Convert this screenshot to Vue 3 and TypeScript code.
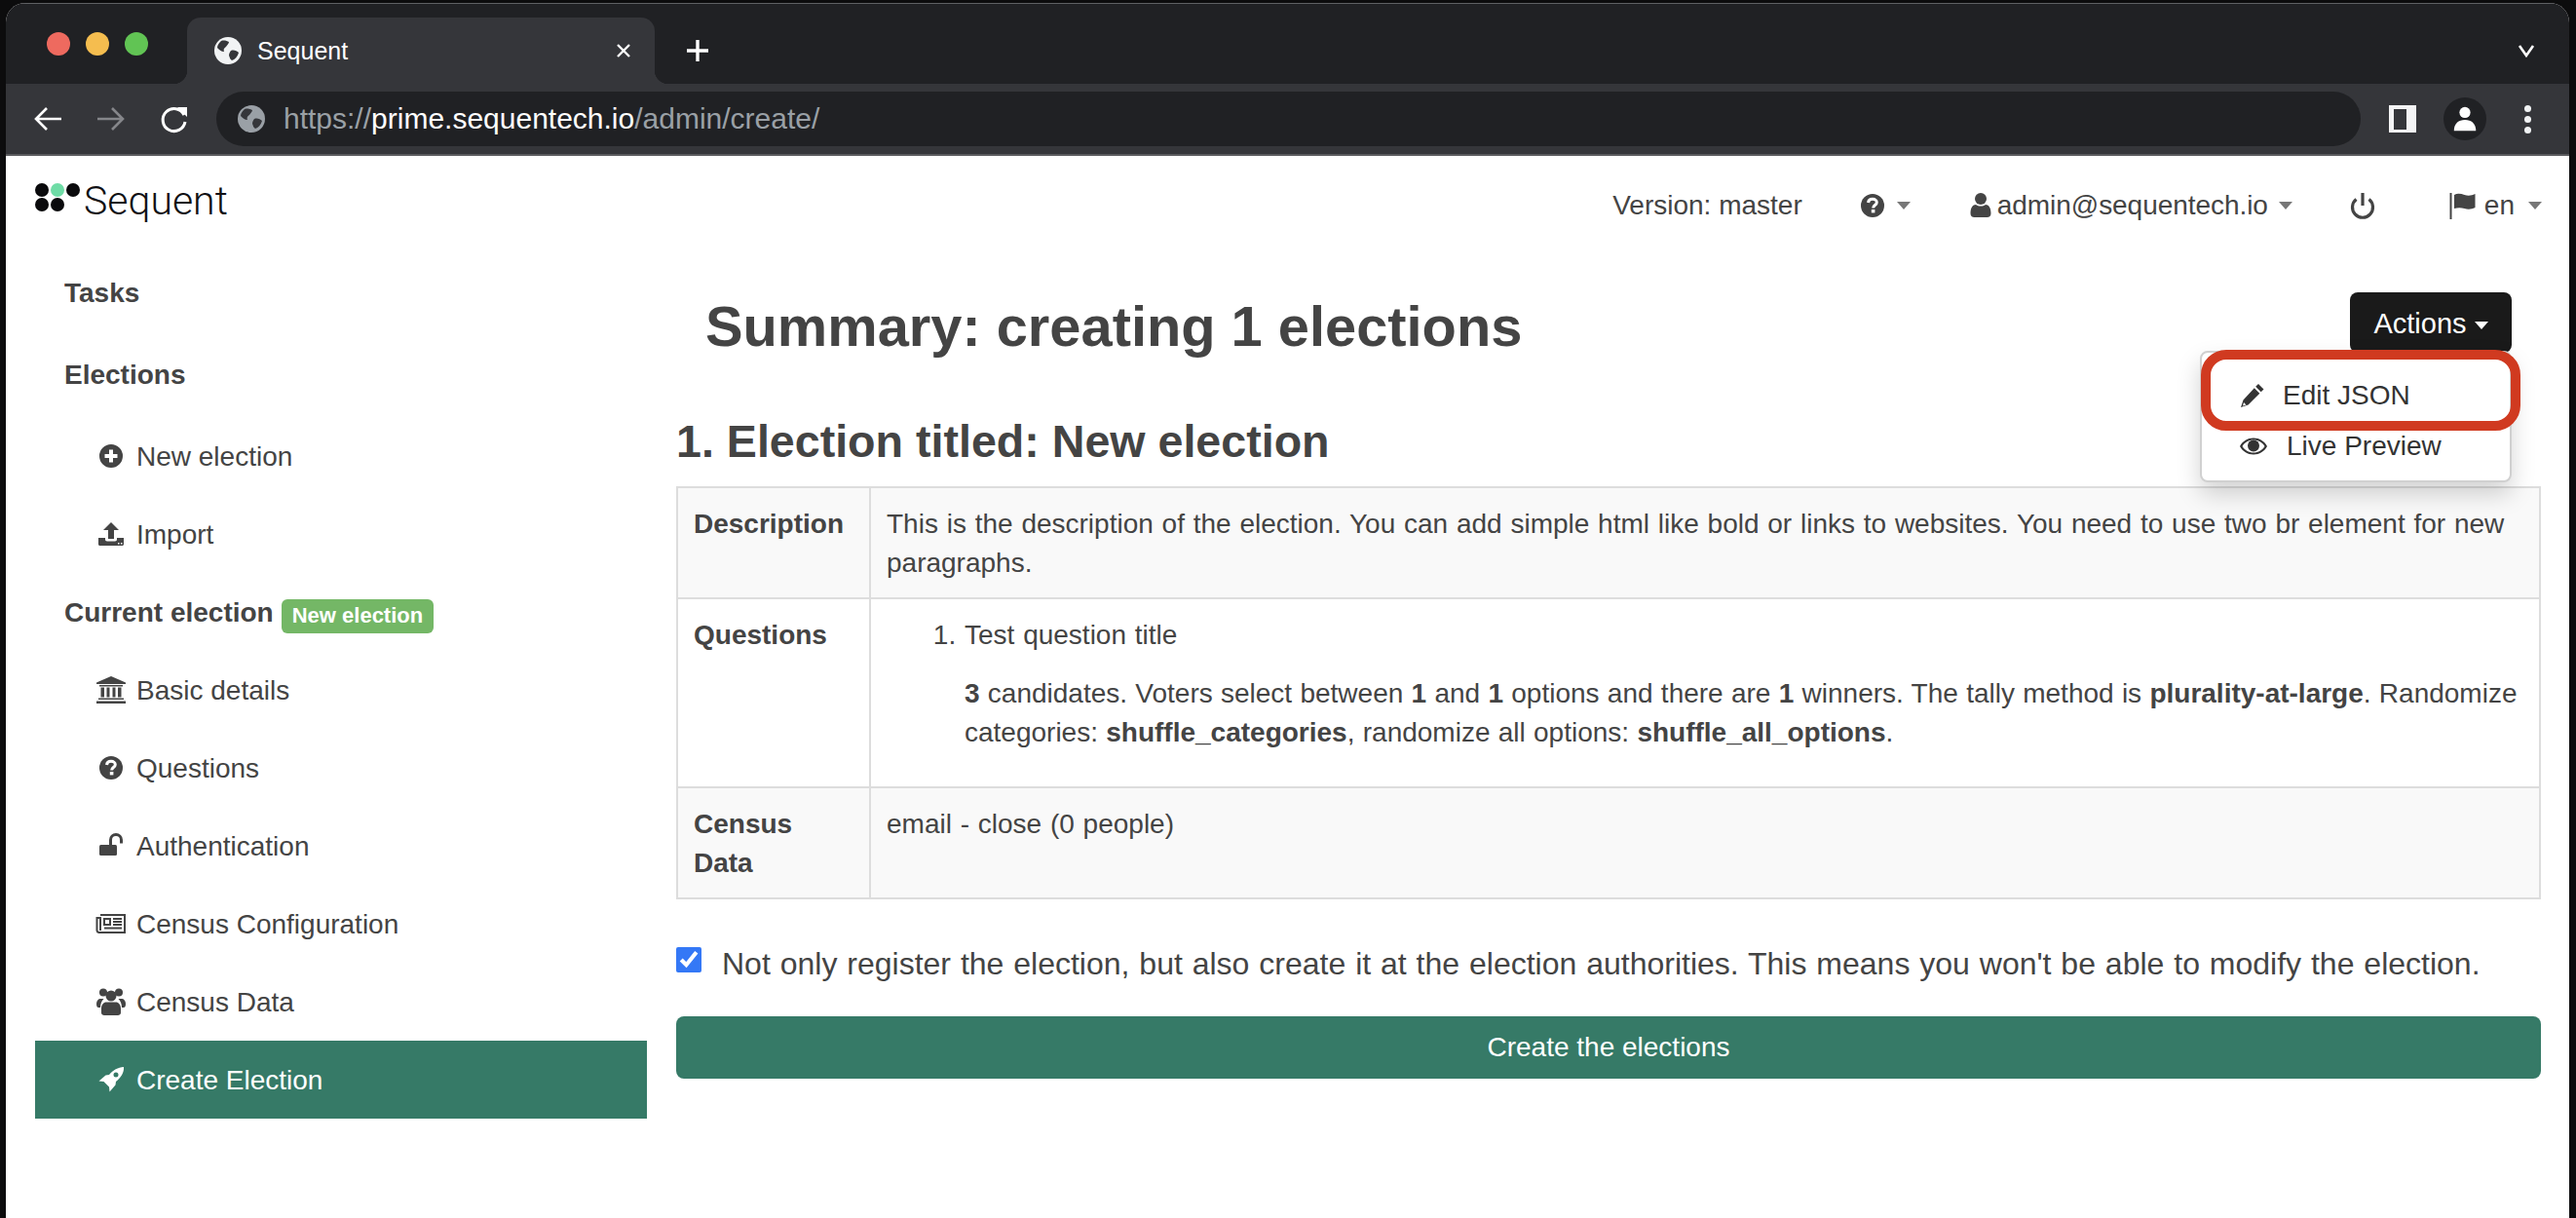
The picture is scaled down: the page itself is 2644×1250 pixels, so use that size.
<template>
  <div class="desktop">
    <div class="window">
      <div class="titlebar">
        <div class="lights">
          <span class="light red"></span>
          <span class="light yellow"></span>
          <span class="light green"></span>
        </div>
        <div class="tab">
          <svg class="globe" viewBox="0 0 32 32" v-html="globe"></svg>
          <span class="tab-title">Sequent</span>
          <svg class="tab-close" viewBox="0 0 16 16"><path d="M2 2l12 12M14 2L2 14" /></svg>
        </div>
        <svg class="new-tab" viewBox="0 0 24 24"><path d="M12 1v22M1 12h22" /></svg>
        <svg class="tab-list" viewBox="0 0 18 14"><path d="M2 2l7 10 7-10" /></svg>
      </div>

      <div class="toolbar">
        <svg class="nav-btn" viewBox="0 0 32 32"><path d="M29 16H4M14 5L3 16l11 11" /></svg>
        <svg class="nav-btn dim" viewBox="0 0 32 32"><path d="M4 16h25M19 5l11 11-11 11" /></svg>
        <svg class="nav-btn reload" viewBox="0 0 32 32">
          <path d="M26 12a11.5 11.5 0 1 0 1 7" />
          <path class="solid" d="M19 4h10v10z" />
        </svg>
        <div class="address">
          <svg class="globe dim-globe" viewBox="0 0 32 32" v-html="globe"></svg>
          <span class="url">https://<b>prime.sequentech.io</b>/admin/create/</span>
        </div>
        <div class="panel-icon"><i></i></div>
        <div class="avatar">
          <svg viewBox="0 0 32 32"><circle cx="16" cy="9" r="6" /><path d="M4 29c0-8 5-12 12-12s12 4 12 12z" /></svg>
        </div>
        <div class="kebab"><i></i><i></i><i></i></div>
      </div>

      <div class="content">
        <header class="topnav">
          <div class="logo">
            <div class="logo-dots">
              <i></i><i class="mint"></i><i></i>
              <i></i><i></i>
            </div>
            <span class="logo-text">Sequent</span>
          </div>
          <div class="topnav-right">
            <span>Version: master</span>
            <span class="nav-item help">
              <svg class="nav-ico" viewBox="0 0 32 32" v-html="icons.help"></svg>
              <i class="caret"></i>
            </span>
            <span class="nav-item">
              <svg class="nav-ico" viewBox="0 0 32 32" v-html="icons.user"></svg>
              <span class="email">admin@sequentech.io</span>
              <i class="caret"></i>
            </span>
            <svg class="nav-ico" viewBox="0 0 32 32" v-html="icons.power"></svg>
            <span class="nav-item lang">
              <svg class="nav-ico" viewBox="0 0 32 32" v-html="icons.flag"></svg>
              <span class="lang-code">en</span>
              <i class="caret"></i>
            </span>
          </div>
        </header>

        <div class="layout">
          <aside class="sidebar">
            <div class="side-head">Tasks</div>
            <div class="side-head spaced">Elections</div>
            <div class="side-link spaced">
              <svg class="ico" viewBox="0 0 32 32" v-html="icons.plus"></svg>New election
            </div>
            <div class="side-link">
              <svg class="ico" viewBox="0 0 32 32" v-html="icons.upload"></svg>Import
            </div>
            <div class="side-head">
              <span>Current election</span><span class="badge">New election</span>
            </div>
            <div
              v-for="item in electionLinks"
              :key="item.label"
              :class="['side-link', { active: item.active }]"
            >
              <svg class="ico" viewBox="0 0 32 32" v-html="icons[item.icon]"></svg>{{ item.label }}
            </div>
          </aside>

          <main class="main">
            <div class="title-row">
              <h1>Summary: creating 1 elections</h1>
              <div class="actions">
                <button class="actions-btn">Actions <i class="caret light-caret"></i></button>
                <div class="menu">
                  <div class="menu-item">
                    <svg class="ico" viewBox="0 0 32 32" v-html="icons.pencil"></svg>
                    <span>Edit JSON</span>
                  </div>
                  <div class="menu-item live">
                    <svg class="ico" viewBox="0 0 32 32" v-html="icons.eye"></svg>
                    <span>Live Preview</span>
                  </div>
                  <div class="highlight"></div>
                </div>
              </div>
            </div>

            <h2>1. Election titled: New election</h2>

            <table class="summary">
              <tbody>
                <tr>
                  <th>Description</th>
                  <td>This is the description of the election. You can add simple html like bold or links to websites. You need to use two br element for new paragraphs.</td>
                </tr>
                <tr>
                  <th>Questions</th>
                  <td>
                    <ol>
                      <li>
                        Test question title
                        <p>
                          <b>3</b> candidates. Voters select between <b>1</b> and <b>1</b> options and there are <b>1</b> winners. The tally method is <b>plurality-at-large</b>. Randomize categories: <b>shuffle_categories</b>, randomize all options: <b>shuffle_all_options</b>.
                        </p>
                      </li>
                    </ol>
                  </td>
                </tr>
                <tr>
                  <th>Census Data</th>
                  <td>email - close (0 people)</td>
                </tr>
              </tbody>
            </table>

            <label class="confirm">
              <input type="checkbox" checked />
              <span>Not only register the election, but also create it at the election authorities. This means you won't be able to modify the election.</span>
            </label>

            <button class="create-btn">Create the elections</button>
          </main>
        </div>
      </div>
    </div>
  </div>
</template>

<script setup lang="ts">
const globe = `<circle cx="16" cy="16" r="14" fill="currentColor"/>
<path fill="#35363a" d="M9 6c3-1 6 0 8 1 0 2-2 3-3 5-2 1-3 3-2 5-3 0-5-2-7-4 0-3 2-5 4-7zM19 16c3-1 6 0 8 2-1 4-4 7-7 8-2-1-2-3-3-5 0-2 1-4 2-5z"/>`;

const icons: Record<string, string> = {
  plus: `<path fill="currentColor" fill-rule="evenodd" d="M16 4a12 12 0 1 0 0 24a12 12 0 0 0 0-24zM14 9.5h4V14h4.5v4H18v4.5h-4V18H9.5v-4H14z"/>`,
  upload: `<path fill="currentColor" fill-rule="evenodd" d="M16 4l8 8h-5v9h-6v-9H8zM3 20h7v1.5c0 1 .7 2 2 2h8c1.3 0 2-1 2-2V20h7v6.5c0 .8-.7 1.500-1.500 1.500h-23C3.700 28 3 27.300 3 26.500zM23 25h1.500v1.500H23zM26 25h1.500v1.500H26z"/>`,
  bank: `<path fill="currentColor" d="M16 2l15 6.500V10H1V8.500zM4 11h24v1.500H4zM5.500 13.500h3.500v10H5.500zM11.500 13.500h3v10h-3zM17.500 13.500h3v10h-3zM23 13.500h3.500v10H23zM3 24.500h26V26H3zM1 27.500h30V30H1z"/>`,
  help: `<circle cx="16" cy="16" r="12" fill="currentColor"/><path fill="none" stroke="#fff" stroke-width="3" d="M11.500 13c.3-2.400 2-3.700 4.500-3.700 2.600 0 4.300 1.500 4.300 3.400 0 2.800-3.700 2.900-3.700 5.800"/><rect x="14.800" y="20" width="3.600" height="3.400" fill="#fff"/>`,
  unlock: `<rect x="4" y="15" width="18" height="11" rx="1.500" fill="currentColor"/><path fill="none" stroke="currentColor" stroke-width="3" d="M15.500 15v-5a5.500 5.500 0 0 1 11 0v3.500"/>`,
  news: `<path fill="none" stroke="currentColor" stroke-width="2" d="M5 7h25v18H3.500A2.500 2.500 0 0 1 1.500 23V10H5v13"/><path fill="none" stroke="currentColor" stroke-width="2" d="M9 11h6v6H9zM18 11h9M18 14h9M18 17h9M9 20.500h18"/>`,
  users: `<g fill="currentColor"><circle cx="8" cy="6.500" r="4"/><circle cx="24" cy="6.500" r="4"/><circle cx="16" cy="10" r="5.500"/><path d="M1 18c0-3 2-5 4-5h3.500C6.500 15 5 18 5 22H3c-1 0-2-1-2-4zM31 18c0-3-2-5-4-5h-3.500c2 2 3.500 5 3.500 9h2c1 0 2-1 2-4zM9 30c-1.500 0-3-1-3-2.500V23c0-4 2.500-6.500 5-6.500h10c2.500 0 5 2.500 5 6.500v4.500c0 1.500-1.500 2.500-3 2.500z"/></g>`,
  rocket: `<path fill="currentColor" fill-rule="evenodd" d="M29 3c-6 .5-11 3-15 8l-3.500.5L3.500 17.500l5 .5L14 23.500l.5 5 6-7 .5-3.500c5-4 8.500-9 8-15zM21 8.500a2.500 2.500 0 1 1 0 5a2.500 2.500 0 0 1 0-5z"/>`,
  user: `<circle cx="16" cy="9" r="6" fill="currentColor"/><path fill="currentColor" d="M5.500 24c0-6 2.500-9 5.500-9 1.500 1 3 1.600 5 1.600s3.500-.6 5-1.600c3 0 5.500 3 5.500 9 0 2.500-1.500 4-4 4H9.500c-2.500 0-4-1.500-4-4z"/>`,
  power: `<path fill="none" stroke="currentColor" stroke-width="3.200" d="M9.500 9.500a10.500 10.500 0 1 0 13 0M16 3v13"/>`,
  flag: `<path fill="currentColor" d="M3.500 3h2v27h-2zM8 5c3.500-2 7-1 10.500 0s7 1 11-1v14c-4 2-7.500 2-11 1s-7-1-10.500 0z"/>`,
  pencil: `<path fill="currentColor" fill-rule="evenodd" d="M21 4l5.500 5.500-2.800 2.800-5.500-5.500zM16.800 8.200l5.500 5.500L10.500 25.500 3 28l2.500-7.500zM6 23l-1 3.500 3.500-1z"/>`,
  eye: `<path fill="currentColor" fill-rule="evenodd" d="M2 16c3-5.500 8-8.500 14-8.500S27 10.500 30 16c-3 5.500-8 8.500-14 8.500S5 21.500 2 16zM4.500 16c2.500 4 6.500 6.500 11.500 6.500S25 20 27.500 16c-2.500-4-6.500-6.500-11.500-6.500S7 12 4.500 16z"/><circle cx="16" cy="15.500" r="6" fill="currentColor"/>`,
};

const electionLinks = [
  { label: "Basic details", icon: "bank" },
  { label: "Questions", icon: "help" },
  { label: "Authentication", icon: "unlock" },
  { label: "Census Configuration", icon: "news" },
  { label: "Census Data", icon: "users" },
  { label: "Create Election", icon: "rocket", active: true },
];
</script>

<style>
html,
body {
  margin: 0;
  background: #0c0c0d;
  overflow: hidden;
}
</style>

<style scoped>
.desktop {
  height: 1250px;
  padding: 3px 7px 0 6px;
  box-sizing: border-box;
  font-family: "Liberation Sans", Arial, sans-serif;
  font-size: 28px;
  line-height: 40px;
  color: #444;
}

.window {
  height: 100%;
  display: flex;
  flex-direction: column;
  border-radius: 20px 20px 0 0;
  overflow: hidden;
  background: #fff;
}

/* browser chrome */
.titlebar {
  height: 82px;
  flex: none;
  display: flex;
  align-items: flex-end;
  background: #202124;
  border-top: 1px solid #5f6063;
}

.lights {
  display: flex;
  gap: 16px;
  width: 186px;
  padding-left: 42px;
  box-sizing: border-box;
  align-self: flex-start;
  padding-top: 29px;
}

.light {
  width: 24px;
  height: 24px;
  border-radius: 50%;
}
.red {
  background: #ee6a5f;
}
.yellow {
  background: #f5bd4f;
}
.green {
  background: #61c454;
}

.tab {
  position: relative;
  width: 480px;
  height: 68px;
  background: #35363a;
  border-radius: 14px 14px 0 0;
  display: flex;
  align-items: center;
  padding: 0 24px 0 26px;
  box-sizing: border-box;
  color: #fff;
  font-size: 25px;
}

.tab::before,
.tab::after {
  content: "";
  position: absolute;
  bottom: 0;
  width: 14px;
  height: 14px;
}
.tab::before {
  left: -14px;
  background: radial-gradient(circle at 0 0, #202124 14px, #35363a 14.5px);
}
.tab::after {
  right: -14px;
  background: radial-gradient(circle at 100% 0, #202124 14px, #35363a 14.5px);
}

.globe {
  width: 32px;
  height: 32px;
  flex: none;
  color: #f1f3f4;
}

.tab-title {
  margin-left: 14px;
  flex: 1;
}

.tab-close {
  width: 16px;
  height: 16px;
  fill: none;
  stroke: #fff;
  stroke-width: 2.4;
}

.new-tab {
  width: 24px;
  height: 24px;
  margin: 0 0 22px 32px;
  fill: none;
  stroke: #fff;
  stroke-width: 3.4;
}

.tab-list {
  width: 18px;
  height: 14px;
  margin: 0 35px 27px auto;
  fill: none;
  stroke: #fff;
  stroke-width: 2.6;
}

.toolbar {
  height: 72px;
  flex: none;
  display: flex;
  align-items: center;
  background: #35363a;
  border-bottom: 2px solid #5a5b5e;
  padding-left: 28px;
}

.nav-btn {
  width: 32px;
  height: 32px;
  margin-right: 30px;
  fill: none;
  stroke: #fff;
  stroke-width: 2.6;
}
.nav-btn.dim {
  stroke: #85868a;
  margin-right: 35px;
}
.nav-btn.reload {
  margin-right: 27px;
  stroke-width: 3;
}
.nav-btn .solid {
  fill: #fff;
  stroke: none;
}

.address {
  flex: 1;
  height: 56px;
  background: #202124;
  border-radius: 28px;
  display: flex;
  align-items: center;
  padding-left: 20px;
  font-size: 30px;
  color: #9aa0a6;
}

.dim-globe {
  color: #9aa0a6;
}

.url {
  margin-left: 17px;
}
.url b {
  font-weight: 400;
  color: #fff;
}

.panel-icon {
  width: 28px;
  height: 28px;
  margin-left: 29px;
  background: #f4f4f5;
  display: flex;
  align-items: center;
  padding-left: 5px;
  box-sizing: border-box;
}
.panel-icon i {
  width: 13px;
  height: 21px;
  background: #35363a;
}

.avatar {
  width: 44px;
  height: 44px;
  margin-left: 28px;
  border-radius: 50%;
  background: #202124;
  display: flex;
  align-items: center;
  justify-content: center;
  fill: #fff;
}
.avatar svg {
  width: 30px;
  height: 30px;
}

.kebab {
  display: flex;
  flex-direction: column;
  gap: 4px;
  margin: 0 39px 0 39px;
}
.kebab i {
  width: 7px;
  height: 7px;
  border-radius: 50%;
  background: #f1f3f4;
}

/* page */
.content {
  flex: 1;
  background: #fff;
}

.topnav {
  height: 100px;
  display: flex;
  align-items: center;
  justify-content: space-between;
  padding: 0 28px 0 30px;
}

.logo {
  display: flex;
  align-items: center;
  gap: 4px;
  margin-top: -8px;
}

.logo-dots {
  display: grid;
  grid-template-columns: repeat(3, 14px);
  gap: 1px 2px;
  margin-top: -8px;
}
.logo-dots i {
  width: 14px;
  height: 14px;
  border-radius: 50%;
  background: #0a0a0c;
}
.logo-dots .mint {
  background: #6fdca6;
}

.logo-text {
  font-family: Roboto, "Liberation Sans", sans-serif;
  font-weight: 300;
  font-size: 41px;
  color: #101014;
}

.topnav-right {
  display: flex;
  align-items: center;
  gap: 56px;
  padding-top: 2px;
}

.nav-item {
  display: flex;
  align-items: center;
  gap: 7px;
}

.help {
  gap: 9px;
}

.lang {
  margin-left: 14px;
}
.lang-code {
  margin-right: 7px;
}

.nav-ico {
  width: 32px;
  height: 32px;
  flex: none;
  color: #444;
}

.email {
  margin: 0 4px 0 -6px;
  letter-spacing: -0.05px;
}

.caret {
  width: 0;
  height: 0;
  border-top: 8px solid #777;
  border-left: 7px solid transparent;
  border-right: 7px solid transparent;
}

.light-caret {
  display: inline-block;
  vertical-align: middle;
  border-top-color: #fff;
}

.layout {
  display: flex;
  padding: 0 29px 0 30px;
}

.sidebar {
  width: 628px;
  flex: none;
  margin-right: 30px;
}

.side-head,
.side-link {
  height: 80px;
  box-sizing: border-box;
  padding-top: 2px;
  display: flex;
  align-items: center;
}
.side-head {
  padding-left: 30px;
  font-weight: 700;
}
.side-link {
  padding-left: 62px;
}
.spaced {
  margin-top: 4px;
}

.ico {
  width: 32px;
  height: 32px;
  flex: none;
  margin: -2px 10px 0 0;
}

.side-link.active {
  background: #367a67;
  color: #fff;
}

.badge {
  margin: 6px 0 0 8px;
  padding: 0 11px;
  height: 35px;
  line-height: 34px;
  border-radius: 6px;
  background: #74b766;
  color: #fff;
  font-size: 22px;
}

.main {
  flex: 1;
  min-width: 0;
}

.title-row {
  position: relative;
  display: flex;
  justify-content: space-between;
  padding-top: 40px;
}

h1 {
  margin: 2px 0 0;
  padding-left: 30px;
  font-size: 57.8px;
  line-height: 66px;
  font-weight: 700;
}

.actions {
  position: relative;
  margin-right: 30px;
}

.actions-btn {
  width: 166px;
  height: 62px;
  padding: 2px 0 0;
  border: 0;
  border-radius: 8px;
  background: #1a1a1a;
  color: #fff;
  font: inherit;
  font-size: 29px;
}

.menu {
  position: absolute;
  top: 60px;
  right: 0;
  width: 320px;
  height: 135px;
  box-sizing: border-box;
  padding-top: 18px;
  background: #fff;
  border: 2px solid #d0d0d0;
  border-radius: 8px;
  box-shadow: 0 12px 24px rgba(0, 0, 0, 0.175);
  color: #333;
}

.menu-item {
  height: 52px;
  display: flex;
  align-items: center;
  padding-left: 37px;
}
.menu-item .ico {
  margin: 0 14px 0 0;
}
.menu-item.live .ico {
  margin-right: 18px;
}

.highlight {
  position: absolute;
  top: -3px;
  left: -1px;
  right: -11px;
  height: 83px;
  box-sizing: border-box;
  border: 10px solid #d03a20;
  border-radius: 26px;
}

h2 {
  margin: 59px 0 19px;
  font-size: 46.6px;
  line-height: 53px;
  font-weight: 700;
}

.summary {
  width: 100%;
  border-collapse: collapse;
  table-layout: fixed;
}

.summary th,
.summary td {
  padding: 17px 16px 15px;
  border: 2px solid #ddd;
  text-align: left;
  vertical-align: top;
}

.summary th {
  width: 164px;
  font-weight: 700;
}

.summary td {
  word-spacing: 1px;
}

.summary p {
  margin: 20px 0 0;
  word-spacing: 0.5px;
}

.summary tr:nth-child(odd) {
  background: #f9f9f9;
}

.summary ol {
  margin: 0 0 20px;
  padding-left: 80px;
}

.confirm {
  display: flex;
  align-items: flex-start;
  gap: 21px;
  margin-top: 48px;
  font-size: 32px;
  word-spacing: 1px;
}

.confirm input {
  width: 26px;
  height: 26px;
  margin: 1px 0 0;
  accent-color: #3478f6;
}

.confirm span {
  margin-top: -2px;
}

.create-btn {
  display: block;
  width: 100%;
  height: 64px;
  margin-top: 34px;
  border: 0;
  border-radius: 8px;
  background: #367a67;
  color: #fff;
  font: inherit;
}
</style>
